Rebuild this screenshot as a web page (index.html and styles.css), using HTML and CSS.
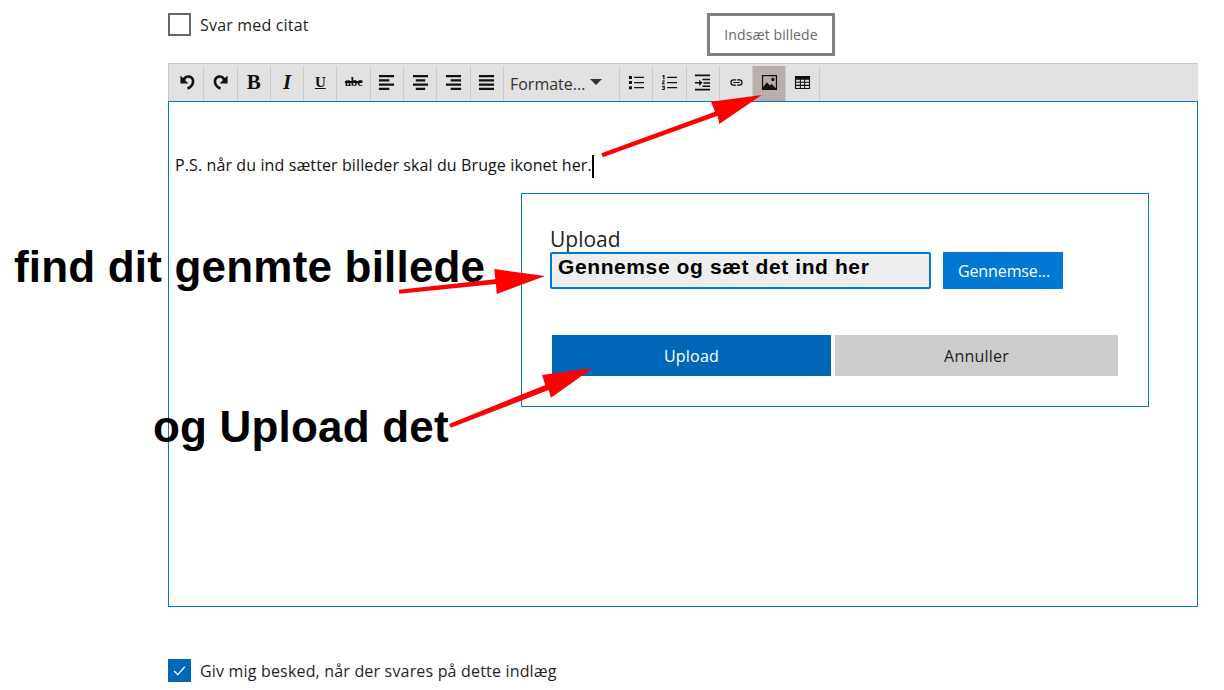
FILE: index.html
```html
<!DOCTYPE html>
<html lang="da">
<head>
<meta charset="utf-8">
<title>Indsæt billede</title>
<link rel="stylesheet" href="styles.css">
</head>
<body>
<main class="page">
  <label class="check-row top-check">
    <span class="box"></span>
    <span class="check-label">Svar med citat</span>
  </label>
  <div class="toolbar">
    <span class="tb"><svg viewBox="0 0 18 18"><path d="M1.500 1.500v8.500h8.500z"/><path class="stroke" d="M5 6.500A5 5 0 0 1 14.800 8.800c0 2.500-1.800 4.700-5.800 6.700"/></svg></span>
    <span class="tb"><svg viewBox="0 0 18 18"><path d="M16.500 1.500v8.500H8z"/><path class="stroke" d="M13 6.500A5 5 0 0 0 3.200 8.800c0 2.500 1.800 4.700 5.800 6.700"/></svg></span>
    <span class="tb tb-serif tb-b">B</span>
    <span class="tb tb-serif tb-i">I</span>
    <span class="tb tb-serif tb-u">U</span>
    <span class="tb tb-serif tb-s">abc</span>
    <span class="tb"><svg viewBox="0 0 18 18"><path d="M1 1h16v2.500H1zM1 5.500h11v2.500H1zM1 10h16v2.500H1zM1 14.500h11V17H1z"/></svg></span>
    <span class="tb"><svg viewBox="0 0 18 18"><path d="M1 1h16v2.500H1zM4 5.500h10v2.500H4zM1 10h16v2.500H1zM4 14.500h10V17H4z"/></svg></span>
    <span class="tb"><svg viewBox="0 0 18 18"><path d="M1 1h16v2.500H1zM6 5.500h11v2.500H6zM1 10h16v2.500H1zM6 14.500h11V17H6z"/></svg></span>
    <span class="tb"><svg viewBox="0 0 18 18"><path d="M1 1h16v2.500H1zM1 5.500h16v2.500H1zM1 10h16v2.500H1zM1 14.500h16V17H1z"/></svg></span>
    <span class="tb tb-format">Formate...<i class="caret"></i></span>
    <span class="tb"><svg viewBox="0 0 18 18"><path d="M1 2h3.200v3.200H1zM1 7.500h3.200v3.200H1zM1 13h3.200v3.200H1zM6.500 3h10.500v1.300H6.500zM6.500 8.400h10.500v1.300H6.500zM6.500 13.800h10.500v1.300H6.500z"/></svg></span>
    <span class="tb"><svg viewBox="0 0 18 18"><path d="M6.500 3h10.500v1.300H6.500zM6.500 8.400h10.500v1.300H6.500zM6.500 13.800h10.500v1.300H6.500zM2.200 1h1.500v4.500H2.400V2.400L1.500 2.800V1.800zM1 6.800h3v1l-1.800 2H4v1H1v-1l1.800-2H1zM1 12.500h3v4.500H1v-1h2v-.8H1.600v-.9H3v-.8H1z"/></svg></span>
    <span class="tb"><svg viewBox="0 0 18 18"><path d="M1 .5h16v2H1zM9 5h8v1.500H9zM10 8.700h7v1.500h-7zM9 12.300h8v1.500H9zM1 15.500h16v2H1zM1 8.500h4.500V6l3.500 3.300-3.500 3.300V10H1z"/></svg></span>
    <span class="tb"><svg viewBox="0 0 18 18" class="link"><path d="M6 5.500h2.500v1.300H6a2.200 2.200 0 0 0 0 4.400h2.500v1.300H6a3.500 3.500 0 0 1 0-7zM12 5.500H9.500v1.300H12a2.200 2.200 0 0 1 0 4.400H9.500v1.300H12a3.500 3.500 0 0 0 0-7zM5.500 8.400h7v1.200h-7z"/></svg></span>
    <span class="tb tb-active"><svg viewBox="0 0 18 18"><path fill-rule="evenodd" d="M1 1h16v16H1zM2.300 2.300v11.500l4-5 3 3.500 2-2 4.400 5V2.300zM12.500 4a1.800 1.800 0 1 1 0 3.600 1.800 1.800 0 0 1 0-3.600z"/></svg></span>
    <span class="tb"><svg viewBox="0 0 18 18"><path fill-rule="evenodd" d="M1 2h16v14H1zM2.200 6v2.200h4V6zM7.300 6v2.200h3.400V6zM11.800 6v2.200h4V6zM2.200 9.300v2.200h4V9.300zM7.300 9.300v2.200h3.400V9.300zM11.800 9.300v2.200h4V9.300zM2.200 12.600v2.200h4v-2.200zM7.300 12.600v2.200h3.400v-2.200zM11.800 12.600v2.200h4v-2.200z"/></svg></span>
  </div>
  <div class="editor">
    <p class="editor-text">P.S. når du ind sætter billeder skal du Bruge ikonet her.<span class="cursor"></span></p>
    <section class="dialog">
      <h2 class="dialog-title">Upload</h2>
      <div class="file-row">
        <div class="file-input">Gennemse og sæt det ind her</div>
        <button class="browse">Gennemse...</button>
      </div>
      <div class="dialog-actions">
        <button class="act act-primary">Upload</button>
        <button class="act act-cancel">Annuller</button>
      </div>
    </section>
  </div>
  <label class="check-row bottom-check">
    <span class="box box-on"><svg viewBox="0 0 23 23"><path d="M5 12l4.500 4.500L18 7" fill="none" stroke="#fff" stroke-width="1.600"/></svg></span>
    <span class="check-label">Giv mig besked, når der svares på dette indlæg</span>
  </label>
</main>
<div class="tooltip">Indsæt billede</div>
<div class="note note-find">find dit genmte billede</div>
<div class="note note-upload">og Upload det</div>
<svg class="arrows" viewBox="0 0 1224 690">
  <path d="M601.300 153.300L715 111.700 711 101.700 761.700 95 719.300 124 717.700 115.700 602.700 157.300z"/>
  <path d="M398.700 289.700L495.300 279.300 494.300 269 545 276 496.700 294 496 284 399.300 293.700z"/>
  <path d="M449 424L545.300 385 542 375 592.700 368 551 397.700 548.700 390 450.700 427.700z"/>
</svg>
</body>
</html>
```

FILE: styles.css
```css
* { box-sizing: border-box; }
html, body { margin: 0; padding: 0; height: 690px; overflow: hidden; background: #fff; }
body { position: relative; font-family: "Open Sans", "Noto Sans", sans-serif; color: #1f1f1f; }
.page { padding: 13px 26px 0 168px; }

.check-row { display: flex; align-items: center; gap: 9px; height: 23px; }
.box { width: 23px; height: 23px; border: 2px solid #666; background: #fff; flex: none; display: block; }
.box svg { display: block; width: 19px; height: 19px; }
.box-on { background: #0067b8; border-color: #0067b8; }
.check-label { font-size: 16px; letter-spacing: .18px; line-height: 22px; }

.toolbar { display: flex; margin-top: 27px; height: 38px; padding: 2px 0 0 3px; background: #e1e1e1; border-top: 1px solid #c8c8c8; box-shadow: inset 1px 0 #c8c8c8; }
.tb { width: 33.300px; height: 36px; padding-bottom: 4px; display: flex; align-items: center; justify-content: center; border-right: 1px solid #cacaca; flex: none; color: #111; }
.tb svg { width: 17px; height: 17px; fill: #111; display: block; }
.tb svg .stroke { fill: none; stroke: #111; stroke-width: 2.800; }
.tb-active { background: #b9aeaa; }
.tb-serif { font-family: "Liberation Serif", serif; }
.tb-b { font-weight: 700; font-size: 21px; }
.tb-i { font-weight: 700; font-style: italic; font-size: 21px; }
.tb-u { font-weight: 700; font-size: 15px; text-decoration: underline; }
.tb-s { font-size: 12px; font-weight: 700; text-decoration: line-through; text-decoration-thickness: 1.500px; letter-spacing: -.2px; }
.tb-format { width: 116px; justify-content: flex-start; padding: 4px 0 4px 6px; font-size: 16px; color: #333; }
.caret { width: 0; height: 0; margin: -5px 0 0 5px; border: 6px solid transparent; border-top: 6px solid #333; border-bottom: 0; }

.editor { position: relative; height: 506px; border: 1px solid #0078d4; padding: 51px 6px 0; }
.editor-text { margin: 0; font-size: 16px; line-height: 24px; color: #111; letter-spacing: .11px; }
.cursor { display: inline-block; width: 2px; height: 23px; background: #000; vertical-align: middle; }

.dialog { position: absolute; left: 352px; top: 91px; width: 628px; height: 214px; border: 1px solid #0078d4; background: #fff; padding: 33px 30px 0 28px; }
.dialog-title { margin: 0; font-size: 21px; font-weight: 400; line-height: 25px; height: 25px; color: #1f1f1f; }
.file-row { display: flex; gap: 12px; }
.file-input { width: 381px; height: 37px; background: #eee; border: 2px solid #0078d4; border-radius: 2px; font: 700 21px/25px "Liberation Sans", sans-serif; color: #000; padding: 0 0 0 6px; letter-spacing: .6px; }
.browse { width: 120px; height: 37px; background: #0078d4; color: #fff; border: 0; font: 16px "Open Sans", sans-serif; letter-spacing: -.1px; padding: 0 0 0 2px; }
.dialog-actions { display: flex; gap: 4px; margin: 46px 0 0 2px; }
.act { height: 41px; border: 0; font: 16px "Open Sans", sans-serif; letter-spacing: .2px; padding: 0; }
.act-primary { width: 279px; background: #0067b8; color: #fff; }
.act-cancel { width: 283px; background: #ccc; color: #1f1f1f; }

.bottom-check { margin-top: 52px; }

.tooltip { position: absolute; left: 707px; top: 13px; width: 128px; height: 43px; border: 3px solid #808080; background: #fff; color: #6a6a6a; font-size: 14px; letter-spacing: .1px; line-height: 37px; text-align: center; }
.note { position: absolute; font: 700 44px/50px "Liberation Sans", sans-serif; color: #000; white-space: nowrap; letter-spacing: .19px; }
.note-find { left: 14px; top: 242px; }
.note-upload { left: 153px; top: 402px; }
.arrows { position: absolute; left: 0; top: 0; width: 1224px; height: 690px; fill: #f00; pointer-events: none; }
```
